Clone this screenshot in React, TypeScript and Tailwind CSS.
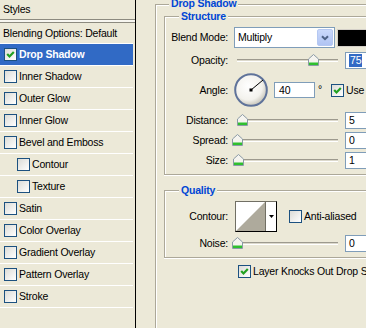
import React from 'react';

type Item = { label: string; checked?: boolean; selected?: boolean; sub?: boolean };

const items: Item[] = [
  { label: 'Drop Shadow', checked: true, selected: true },
  { label: 'Inner Shadow' },
  { label: 'Outer Glow' },
  { label: 'Inner Glow' },
  { label: 'Bevel and Emboss' },
  { label: 'Contour', sub: true },
  { label: 'Texture', sub: true },
  { label: 'Satin' },
  { label: 'Color Overlay' },
  { label: 'Gradient Overlay' },
  { label: 'Pattern Overlay' },
  { label: 'Stroke' },
];

function Check({ checked }: { checked?: boolean }) {
  return (
    <span className="relative block w-[13px] h-[13px] shrink-0 border border-[#1c5180] bg-linear-to-br from-[#dcdcd7] to-white">
      {checked && (
        <svg className="absolute left-0 top-0" width="11" height="11" viewBox="0 0 11 11">
          <path d="M2.2 5 L4.5 7.4 L8.8 3" fill="none" stroke="#21a121" strokeWidth="2.2" />
        </svg>
      )}
    </span>
  );
}

function Group({ title, className, children }: { title: string; className?: string; children: React.ReactNode }) {
  return (
    <div className={`relative w-[300px] border-l border-t border-b border-[#aca899] shadow-[inset_1px_1px_0_#fff,0_1px_0_#fff] ${className ?? ''}`}>
      <span className="absolute top-[-6px] left-[14px] px-[2px] bg-[#ece9d8] font-bold text-[#0046d5] leading-none">
        {title}
      </span>
      {children}
    </div>
  );
}

function Label({ children }: { children: React.ReactNode }) {
  return <span className="w-[63px] shrink-0 text-right">{children}</span>;
}

function Slider({ thumb }: { thumb: string }) {
  // thumb: full class for the thumb's left offset
  return (
    <div className="relative ml-[4px] w-[109px] h-[17px] shrink-0">
      <div className="absolute left-[5px] top-[7px] w-[101px] h-[3px] border-t border-[#9d9a8e] border-b border-b-white bg-[#dcd9cc]" />
      <svg className={`absolute top-[2px] ${thumb}`} width="11" height="12" viewBox="0 0 11 12">
        <path d="M5.5 0.5 L10.5 5 V11.5 H0.5 V5 Z" fill="#f5f4ef" stroke="#8b9aa6" />
        <rect x="1" y="8.5" width="9" height="2.5" fill="#2fbf2f" />
      </svg>
    </div>
  );
}

function NumBox({ children }: { children: React.ReactNode }) {
  return (
    <div className="ml-[4px] w-[44px] h-[17px] shrink-0 border border-[#7f9db9] bg-white flex items-center pl-[3px]">
      {children}
    </div>
  );
}

function Dial() {
  return (
    <svg className="ml-[6px] shrink-0" width="34" height="34" viewBox="0 0 34 34">
      <defs>
        <radialGradient id="dialFill" cx="42%" cy="38%" r="62%">
          <stop offset="0" stopColor="#ffffff" />
          <stop offset="0.7" stopColor="#f3f2ed" />
          <stop offset="1" stopColor="#c8c6bb" />
        </radialGradient>
      </defs>
      <circle cx="17" cy="17" r="15.8" fill="url(#dialFill)" stroke="#5f739a" strokeWidth="2" />
      <line x1="17" y1="17" x2="29" y2="7" stroke="#000" strokeWidth="1" />
      <rect x="15.5" y="15.5" width="3" height="3" fill="#000" />
    </svg>
  );
}

function StylesList() {
  return (
    <div className="w-[136px] shrink-0 border-r border-black flex flex-col">
      <div className="h-[19px] flex items-center pl-[3px]">Styles</div>
      <div className="h-[4px] border-y border-[#8c8a7f] bg-[#f7f6f0]" />
      <div className="h-[21px] border-b border-white mr-[2px] flex items-center pl-[3px] whitespace-nowrap">
        Blending Options: Default
      </div>
      {items.map((it) => (
        <div
          key={it.label}
          className={`h-[22px] border-b border-white mr-[2px] flex items-center gap-[2px] whitespace-nowrap ${
            it.sub ? 'pl-[17px]' : 'pl-[4px]'
          } ${it.selected ? 'bg-[#316ac5] text-white font-bold' : ''}`}
        >
          <Check checked={it.checked} />
          <span>{it.label}</span>
        </div>
      ))}
    </div>
  );
}

export default function App() {
  return (
    <div className="w-[366px] h-[328px] overflow-hidden flex bg-[#ece9d8] text-[10.5px] tracking-[-0.2px] leading-none text-black font-['Liberation_Sans',Arial,sans-serif]">
      <StylesList />
      <div className="relative flex-1 min-w-0 pt-[4px] pl-[19px] overflow-hidden">
        <div className="relative w-[400px] h-[340px] border-l border-t border-[#aca899] shadow-[inset_1px_1px_0_#fff] pl-[8px] pt-[11px]">
          <span className="absolute top-[-7px] left-[13px] px-[2px] bg-[#ece9d8] font-bold text-[#0046d5]">
            Drop Shadow
          </span>

          <Group title="Structure" className="pb-[5px]">
            <div className="mt-[10px] h-[21px] flex items-center">
              <Label>Blend Mode:</Label>
              <div className="ml-[6px] w-[101px] h-[21px] shrink-0 border border-[#7f9db9] bg-white flex items-center pl-[3px] pr-[1px]">
                <span className="flex-1">Multiply</span>
                <span className="w-[16px] h-[17px] rounded-[2px] border border-[#b5c8f2] bg-linear-to-b from-[#cbd9fb] to-[#b0c4f3] flex items-center justify-center">
                  <svg width="8" height="6" viewBox="0 0 8 6">
                    <path d="M1 1.2 L4 4.2 L7 1.2" fill="none" stroke="#4d6185" strokeWidth="2" />
                  </svg>
                </span>
              </div>
              <div className="ml-[2px] w-[40px] h-[18px] shrink-0 bg-black border border-[#d4d0c8]" />
            </div>

            <div className="mt-[4px] h-[17px] flex items-center">
              <Label>Opacity:</Label>
              <Slider thumb="left-[76px]" />
              <NumBox>
                <span className="bg-[#316ac5] text-white px-[1px] py-[1px]">75</span>
              </NumBox>
            </div>

            <div className="mt-[4px] h-[34px] flex items-center">
              <Label>Angle:</Label>
              <Dial />
              <div className="ml-[6px] w-[41px] h-[16px] shrink-0 border border-[#7f9db9] bg-white flex items-center pl-[4px]">
                40
              </div>
              <span className="ml-[3px] w-[8px] self-start mt-[11px]">°</span>
              <span className="ml-[5px]">
                <Check checked />
              </span>
              <span className="ml-[2px] whitespace-nowrap">Use Global Light</span>
            </div>

            <div className="mt-[5px] h-[17px] flex items-center">
              <Label>Distance:</Label>
              <Slider thumb="left-[5px]" />
              <NumBox>5</NumBox>
            </div>
            <div className="mt-[3px] h-[17px] flex items-center">
              <Label>Spread:</Label>
              <Slider thumb="left-[0px]" />
              <NumBox>0</NumBox>
            </div>
            <div className="mt-[3px] h-[17px] flex items-center">
              <Label>Size:</Label>
              <Slider thumb="left-[1px]" />
              <NumBox>1</NumBox>
            </div>
          </Group>

          <Group title="Quality" className="mt-[15px] pb-[5px]">
            <div className="mt-[10px] h-[31px] flex items-center">
              <Label>Contour:</Label>
              <div className="ml-[7px] w-[42px] h-[31px] shrink-0 border border-t-[#716f64] border-l-[#716f64] border-r-black border-b-black bg-white flex">
                <svg width="29" height="29" viewBox="0 0 29 29" className="shrink-0">
                  <polygon points="0,29 29,0 29,29" fill="#aeaa9c" />
                </svg>
                <span className="w-[1px] bg-[#716f64]" />
                <span className="flex-1 flex items-center justify-center bg-white">
                  <svg width="5" height="3" viewBox="0 0 5 3">
                    <polygon points="0,0 5,0 2.5,3" fill="#000" />
                  </svg>
                </span>
              </div>
              <span className="ml-[12px]">
                <Check />
              </span>
              <span className="ml-[2px] whitespace-nowrap">Anti-aliased</span>
            </div>
            <div className="mt-[3px] h-[17px] flex items-center">
              <Label>Noise:</Label>
              <Slider thumb="left-[0px]" />
              <NumBox>0</NumBox>
            </div>
          </Group>

          <div className="mt-[7px] ml-[74px] flex items-center gap-[2px] whitespace-nowrap">
            <Check checked />
            <span>Layer Knocks Out Drop Shadow</span>
          </div>
        </div>
      </div>
    </div>
  );
}
